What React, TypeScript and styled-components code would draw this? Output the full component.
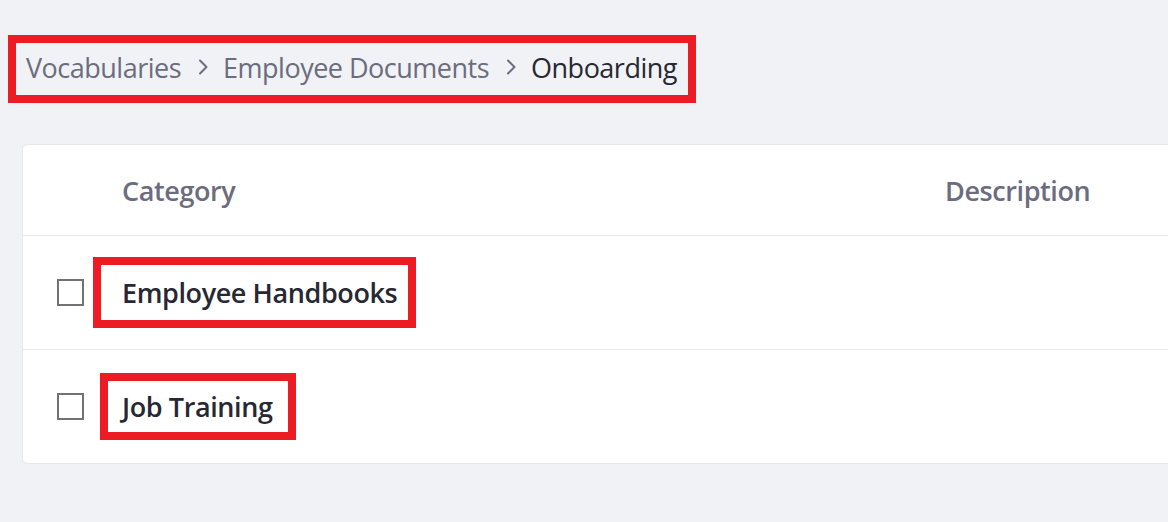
import React from "react";
import styled, { createGlobalStyle } from "styled-components";

const GlobalStyle = createGlobalStyle`
  html, body {
    margin: 0;
    padding: 0;
    background: #f1f2f5;
    overflow: hidden;
  }
  body {
    font-family: "Open Sans", "Noto Sans", "Liberation Sans", sans-serif;
  }
`;

const Page = styled.div`
  width: 1168px;
  height: 522px;
  overflow: hidden;
  box-sizing: border-box;
  padding: 43px 0 0 16px;
`;

const Breadcrumb = styled.nav`
  display: flex;
  align-items: center;
  width: 672px;
  height: 52px;
  box-sizing: border-box;
  padding: 0 0 4px 10px;
  outline: 8px solid #ed1c24;
  font-size: 27px;
  letter-spacing: -0.5px;
`;

const Crumb = styled.span<{ $active?: boolean }>`
  color: ${(p) => (p.$active ? "#272833" : "#6b6c7e")};
  white-space: nowrap;
`;

const Chevron = styled.svg`
  width: 10px;
  height: 16px;
  margin: 0 15px 0 17px;
  flex: none;
`;

const Card = styled.div`
  margin: 49px -40px 0 6px;
  background: #ffffff;
  border: 1px solid #e7e7ed;
  border-radius: 5px;
`;

const Row = styled.div<{ $height: number; $last?: boolean }>`
  display: grid;
  grid-template-columns: 99px 823px 1fr;
  align-items: center;
  height: ${(p) => p.$height}px;
  border-bottom: ${(p) => (p.$last ? "none" : "1px solid #e7e7ed")};
`;

const HeadCell = styled.div`
  color: #6b6c7e;
  font-size: 27px;
  font-weight: 600;
  letter-spacing: -0.4px;
  white-space: nowrap;
`;

const CheckCell = styled.div`
  display: flex;
  align-items: center;
  padding-left: 34px;
`;

const Checkbox = styled.span`
  display: block;
  width: 27px;
  height: 27px;
  box-sizing: border-box;
  border: 2px solid #727272;
  background: #fff;
`;

const Title = styled.div`
  color: #272833;
  font-size: 27px;
  font-weight: 600;
  letter-spacing: -0.4px;
  white-space: nowrap;
`;

const Marked = styled.span<{ $l: number; $r: number; $t: number; $b: number }>`
  position: relative;
  display: inline-block;
  &::after {
    content: "";
    position: absolute;
    left: ${(p) => -p.$l}px;
    right: ${(p) => -p.$r}px;
    top: ${(p) => -p.$t}px;
    bottom: ${(p) => -p.$b}px;
    border: 8px solid #ed1c24;
    pointer-events: none;
  }
`;

const ChevronIcon = () => (
  <Chevron viewBox="0 0 10 16" fill="none">
    <polyline
      points="2,1.5 8.5,8 2,14.5"
      stroke="#6b6c7e"
      strokeWidth="2"
      strokeLinecap="round"
      strokeLinejoin="round"
    />
  </Chevron>
);

export default function App() {
  return (
    <>
      <GlobalStyle />
      <Page>
        <Breadcrumb>
          <Crumb>Vocabularies</Crumb>
          <ChevronIcon />
          <Crumb>Employee Documents</Crumb>
          <ChevronIcon />
          <Crumb $active>Onboarding</Crumb>
        </Breadcrumb>
        <Card>
          <Row $height={90}>
            <div />
            <HeadCell>Category</HeadCell>
            <HeadCell>Description</HeadCell>
          </Row>
          <Row $height={113}>
            <CheckCell>
              <Checkbox />
            </CheckCell>
            <Title>
              <Marked $l={29} $r={19} $t={17} $b={17}>
                Employee Handbooks
              </Marked>
            </Title>
            <div />
          </Row>
          <Row $height={113} $last>
            <CheckCell>
              <Checkbox />
            </CheckCell>
            <Title>
              <Marked $l={22} $r={23} $t={15} $b={15}>
                Job Training
              </Marked>
            </Title>
            <div />
          </Row>
        </Card>
      </Page>
    </>
  );
}
